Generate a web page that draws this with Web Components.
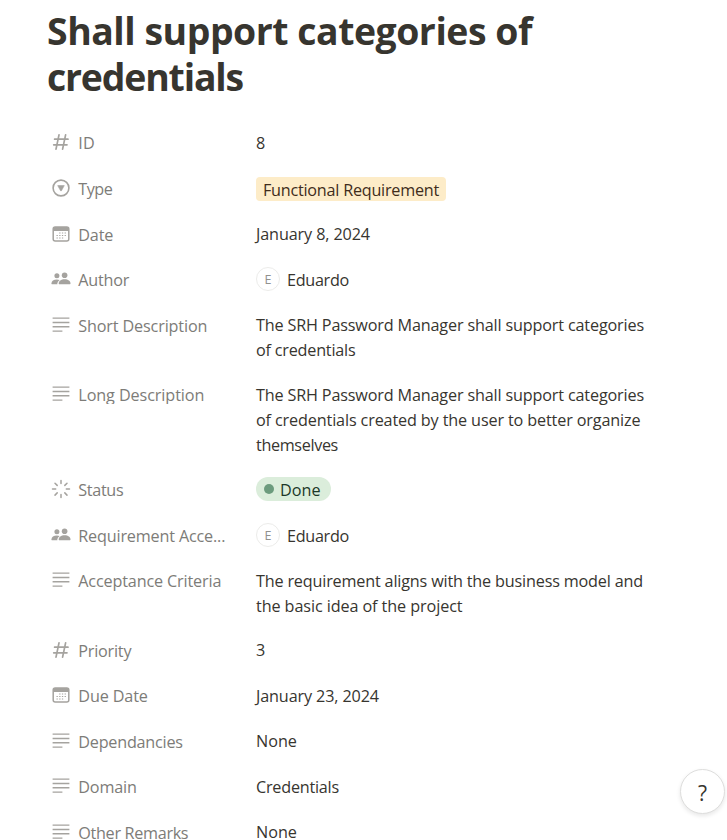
<!DOCTYPE html>
<html lang="en">
<head>
<meta charset="utf-8">
<title>Shall support categories of credentials</title>
<style>
html,body{margin:0;background:#fff;height:840px;overflow:hidden}
body{font-family:"Open Sans","Noto Sans",sans-serif;color:#37352f}
</style>
</head>
<body>
<record-page>
  <page-title slot="title"><fit-text w="485">Shall support categories of</fit-text><fit-text w="196">credentials</fit-text></page-title>
  <prop-row icon="hash"><fit-text slot="label" w="16.5">ID</fit-text><fit-text w="9">8</fit-text></prop-row>
  <prop-row icon="select"><fit-text slot="label" w="34">Type</fit-text><tag-chip><fit-text w="176">Functional Requirement</fit-text></tag-chip></prop-row>
  <prop-row icon="date"><fit-text slot="label" w="35">Date</fit-text><fit-text w="114">January 8, 2024</fit-text></prop-row>
  <prop-row icon="people"><fit-text slot="label" w="51">Author</fit-text><person-chip initial="E"><fit-text w="62">Eduardo</fit-text></person-chip></prop-row>
  <prop-row icon="text"><fit-text slot="label" w="129">Short Description</fit-text><fit-text w="388">The SRH Password Manager shall support categories</fit-text><fit-text w="99.5">of credentials</fit-text></prop-row>
  <prop-row icon="text" clipped><fit-text slot="label" w="126">Long Description</fit-text><fit-text w="388">The SRH Password Manager shall support categories</fit-text><fit-text w="384.5">of credentials created by the user to better organize</fit-text><fit-text w="82">themselves</fit-text></prop-row>
  <prop-row icon="status"><fit-text slot="label" w="45">Status</fit-text><status-pill><fit-text w="40.5">Done</fit-text></status-pill></prop-row>
  <prop-row icon="people"><fit-text slot="label" w="147">Requirement Acce...</fit-text><person-chip initial="E"><fit-text w="62">Eduardo</fit-text></person-chip></prop-row>
  <prop-row icon="text"><fit-text slot="label" w="143">Acceptance Criteria</fit-text><fit-text w="387">The requirement aligns with the business model and</fit-text><fit-text w="206.5">the basic idea of the project</fit-text></prop-row>
  <prop-row icon="hash"><fit-text slot="label" w="53">Priority</fit-text><fit-text w="9">3</fit-text></prop-row>
  <prop-row icon="date"><fit-text slot="label" w="69.5">Due Date</fit-text><fit-text w="123">January 23, 2024</fit-text></prop-row>
  <prop-row icon="text"><fit-text slot="label" w="104.5">Dependancies</fit-text><fit-text w="41">None</fit-text></prop-row>
  <prop-row icon="text"><fit-text slot="label" w="58.5">Domain</fit-text><fit-text w="83">Credentials</fit-text></prop-row>
  <prop-row icon="text"><fit-text slot="label" w="110">Other Remarks</fit-text><fit-text w="41">None</fit-text></prop-row>
  <help-button slot="help">?</help-button>
</record-page>
<script>
const icons = {
  hash:'<g fill="none" stroke="#a5a39f" stroke-width="1.7" stroke-linecap="round"><path d="M7 1.8 4 16.2M13.6 1.8 10.6 16.2M2.6 6.2H16M1.7 11.8H15"/></g>',
  select:'<circle cx="9" cy="9" r="7.9" fill="none" stroke="#a5a39f" stroke-width="1.6"/><path d="M5.7 6.6h6.6L9.4 11.8q-.4.6-.8 0Z" fill="#a5a39f" stroke="#a5a39f" stroke-width=".6" stroke-linejoin="round"/>',
  date:'<rect x="1.2" y="2.1" width="15.6" height="13.8" rx="2" fill="none" stroke="#a5a39f" stroke-width="1.5"/><path d="M1.2 6V4Q1.2 2 3.2 2h11.6q2 0 2 2v2Z" fill="#a5a39f"/><path d="M7.2 8h1.3M9.9 8h1.3M12.6 8h1.3M4.5 10.5h1.3M7.2 10.5h1.3M9.9 10.5h1.3M12.6 10.5h1.3M4.5 13h1.3M7.2 13h1.3M9.9 13h1.3" stroke="#a5a39f" stroke-width="1.2"/>',
  people:'<g fill="#a5a39f"><circle cx="12.6" cy="5.3" r="2.8"/><path d="M7.2 14.2q-.5 0-.5-.8C6.8 11 9 9.2 12.6 9.2s5.8 1.8 5.9 4.2q0 .8-.6.8Z"/><circle cx="4.9" cy="5.8" r="2.5"/><path d="M-.1 14.2q-.6 0-.5-.8c.2-2.4 2.2-4 5.5-4q1.5 0 2.7.5-2.2 1.5-2.3 3.5 0 .5.1.8Z"/></g>',
  text:'<path d="M.6 2.1h16.8M.6 6.5h16.8M.6 10.8h16.8M.6 15.1h9.8" stroke="#a5a39f" stroke-width="1.4"/>',
  status:'<g stroke="#a5a39f" stroke-width="1.5" stroke-linecap="round"><path d="M9 .6v3M9 14.6v3M.5 9.1h3.2M14.3 9.1h3.2M3 3.2l2.2 2.2M12.8 12.9 15 15.1M15 3.2l-2.2 2.2M5.2 12.9 3 15.1"/></g>'
};
function define(name, markup, setup){
  customElements.define(name, class extends HTMLElement{
    constructor(){ super(); this.attachShadow({mode:'open'}); }
    connectedCallback(){ this.shadowRoot.innerHTML = markup; if(setup) setup(this, this.shadowRoot); }
  });
}
define('record-page', `<style>
:host{display:block;width:727px;height:840px;overflow:hidden;position:relative;background:#fff}
.rows{display:flex;flex-direction:column;gap:4.2px;margin-top:23.3px}
::slotted(help-button){position:absolute;right:2px;top:769px}
</style><slot name="title"></slot><div class="rows"><slot></slot></div><slot name="help"></slot>`);
define('page-title', `<style>
:host{display:block;padding:8px 0 0 47px;font-size:37.4px;font-weight:700;line-height:46px}
</style><slot></slot>`);
define('prop-row', `<style>
:host{display:grid;grid-template-columns:203.6px 1fr;padding-left:52.4px;font-size:16.2px;line-height:25px;min-height:41.4px;box-sizing:border-box}
.label{display:flex;height:41.4px;align-items:center;gap:7.9px;color:#7d7c78}
.label svg{width:18px;height:18px;flex:none;overflow:visible;margin-top:-3px}
.value{padding:7.7px 0}
:host([clipped]) .name{height:21px;overflow:hidden;margin-bottom:4px}
</style><div class="label"><svg viewBox="0 0 18 18"></svg><div class="name"><slot name="label"></slot></div></div><div class="value"><slot></slot></div>`,
 (el,root)=>{ root.querySelector('svg').innerHTML = icons[el.getAttribute('icon')]; });
define('tag-chip', `<style>
:host{display:flex;width:max-content;height:24px;padding:0 7px;border-radius:4px;background:#fdecc8;color:#402c1b;line-height:26px}
</style><slot></slot>`);
define('status-pill', `<style>
:host{display:flex;align-items:center;width:max-content;height:24px;padding:0 10.5px 0 8px;border-radius:12px;background:#dbeddb;color:#1c3829;line-height:26px;gap:6px;margin-top:-.4px}
i{width:10px;height:10px;border-radius:50%;background:#6c9b7d}
::slotted(fit-text){margin-top:2px}
</style><i></i><slot></slot>`);
define('person-chip', `<style>
:host{display:flex;align-items:center;gap:7px;height:25px}
b{box-sizing:border-box;width:24px;height:24px;border:1px solid #ececea;border-radius:50%;font-size:12.5px;font-weight:400;line-height:23px;text-align:center;color:#91918e;margin-top:-2px}
::slotted(fit-text){margin-top:1px}
</style><b></b><slot></slot>`, (el,root)=>{ root.querySelector('b').textContent = el.getAttribute('initial'); });
define('help-button', `<style>
:host{display:flex;align-items:center;justify-content:center;width:45px;height:45px;box-sizing:border-box;padding-top:3px;border-radius:50%;background:#fff;border:1px solid #dededd;box-shadow:0 2px 4px rgba(15,15,15,.1);font-size:21px;font-weight:500;line-height:1}
</style><slot></slot>`);
// Spreads letters so that a line has the advance width given in "w".
define('fit-text', `<style>
:host{display:block;width:max-content;white-space:pre}
</style><slot></slot>`);
for(const t of document.querySelectorAll('fit-text')){
  const now = t.getBoundingClientRect().width, want = +t.getAttribute('w');
  t.style.letterSpacing = ((want - now) / t.textContent.length).toFixed(3) + 'px';
}
</script>
</body>
</html>
